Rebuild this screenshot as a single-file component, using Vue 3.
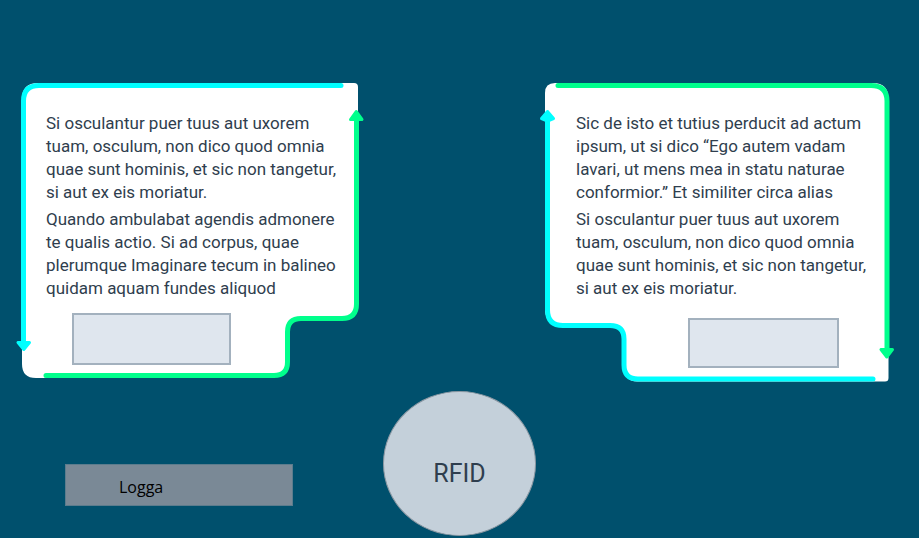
<script setup>
const cards = [
  {
    side: 'left',
    width: 338,
    height: 295,
    shape:
      'M17 0H333Q337 0 337 4V222Q337 236 323 236H280Q267 236 267 249V280Q267 294 253 294L15 295Q1 295 1 281V16Q1 0 17 0Z',
    cyan: 'M2.5 260V18Q2.5 2.5 18 2.5H320',
    green: 'M25 292.5H253Q266.5 292.5 266.5 279V249Q266.5 235.5 280 235.5H321Q335.5 235.5 335.5 221V36',
    cyanArrow: 'M-3 259.5H8.5L2.8 266.5Z',
    greenArrow: 'M329.5 36.5L335.2 28.5L341 36.5Z',
    paragraphs: [
      [
        'Si osculantur puer tuus aut uxorem',
        'tuam, osculum, non dico quod omnia',
        'quae sunt hominis, et sic non tangetur,',
        'si aut ex eis moriatur.',
      ],
      [
        'Quando ambulabat agendis admonere',
        'te qualis actio. Si ad corpus, quae',
        'plerumque Imaginare tecum in balineo',
        'quidam aquam fundes aliquod',
      ],
    ],
  },
  {
    side: 'right',
    width: 344,
    height: 299,
    shape:
      'M10 0H328Q343.5 0 343.5 16V295Q343.5 298.5 340 298.5H92Q79 298 79 284V256Q79 243 66 243H17Q2 243 0 228V10Q0 0 10 0Z',
    cyan: 'M2.5 36V227Q2.5 242.5 18 242.5H65Q79 242.5 79 256V282Q79 296 93 296H328',
    green: 'M13 2.5H326Q342 2.5 342 18V267',
    cyanArrow: 'M-3.5 35.5L2.5 28.5L8.5 35.5L2.5 38Z',
    greenArrow: 'M336 266.5H347.5L341.8 274Z',
    paragraphs: [
      [
        'Sic de isto et tutius perducit ad actum',
        'ipsum, ut si dico “Ego autem vadam',
        'lavari, ut mens mea in statu naturae',
        'conformior.” Et similiter circa alias',
      ],
      [
        'Si osculantur puer tuus aut uxorem',
        'tuam, osculum, non dico quod omnia',
        'quae sunt hominis, et sic non tangetur,',
        'si aut ex eis moriatur.',
      ],
    ],
  },
]
</script>

<template>
  <main class="page">
    <section class="cards">
      <article v-for="card in cards" :key="card.side" class="card" :class="card.side">
        <svg
          class="frame"
          :viewBox="`0 0 ${card.width} ${card.height}`"
          preserveAspectRatio="none"
          aria-hidden="true"
        >
          <path class="shape" :d="card.shape" />
          <path class="line cyan" :d="card.cyan" />
          <path class="line green" :d="card.green" />
          <path class="arrow cyan" :d="card.cyanArrow" />
          <path class="arrow green" :d="card.greenArrow" />
        </svg>
        <div class="copy">
          <p v-for="(lines, i) in card.paragraphs" :key="i">{{ lines.join('\n') }}</p>
        </div>
        <div class="slot"></div>
      </article>
    </section>
    <section class="actions">
      <button class="login" type="button">Logga</button>
      <button class="rfid" type="button">RFID</button>
    </section>
  </main>
</template>

<style>
body {
  background: #00506d;
}
</style>

<style scoped>
.page {
  box-sizing: border-box;
  min-height: 100vh;
  padding-top: 83px;
  background: #00506d;
  color: #2f3e4e;
  font-family: Roboto, 'Liberation Sans', sans-serif;
}

.cards {
  display: grid;
  grid-template-columns: 338fr 344fr;
  column-gap: 186px;
  align-items: start;
  padding: 0 30px 0 21px;
}

.card {
  position: relative;
  box-sizing: border-box;
  padding: 29px 0 13px 25px;
}

.card.right {
  padding: 29px 0 14px 31px;
}

.frame {
  position: absolute;
  inset: 0;
  width: 100%;
  height: 100%;
  overflow: visible;
}

.shape {
  fill: #fff;
}

.line {
  fill: none;
  stroke-width: 5;
  stroke-linecap: round;
}

.line.cyan {
  stroke: #00ffff;
}

.line.green {
  stroke: #00ff8c;
}

.arrow {
  stroke-width: 3;
  stroke-linejoin: round;
}

.arrow.cyan {
  fill: #00ffff;
  stroke: #00ffff;
}

.arrow.green {
  fill: #00ff8c;
  stroke: #00ff8c;
}

.copy {
  position: relative;
  display: grid;
  gap: 4px;
  font-size: 17px;
  line-height: 23px;
  white-space: pre;
}

.copy p {
  margin: 0;
}

.slot {
  position: relative;
  box-sizing: border-box;
  width: 159px;
  height: 52px;
  margin: 13px 0 0 26px;
  border: 2px solid #a3b1be;
  background: #dfe6ee;
}

.right .slot {
  width: 151px;
  height: 50px;
  margin: 18px 50px 0 auto;
}

.actions {
  display: grid;
  grid-template-columns: 1fr auto 1fr;
  align-items: end;
  padding: 9px 0 2px;
}

.login {
  justify-self: start;
  width: 228px;
  height: 42px;
  margin: 0 0 30px 65px;
  padding: 4px 0 0 53px;
  border: 1px solid #5c7c8d;
  background: #7a8996;
  color: #000;
  font: 16px 'Open Sans', 'Noto Sans', sans-serif;
  text-align: left;
}

.rfid {
  width: 153px;
  height: 145px;
  padding: 20px 0 0;
  border: 1px solid #8b98a3;
  border-radius: 50%;
  background: #c4d0da;
  color: #2f3e4e;
  font: 25px Roboto, 'Liberation Sans', sans-serif;
}
</style>
